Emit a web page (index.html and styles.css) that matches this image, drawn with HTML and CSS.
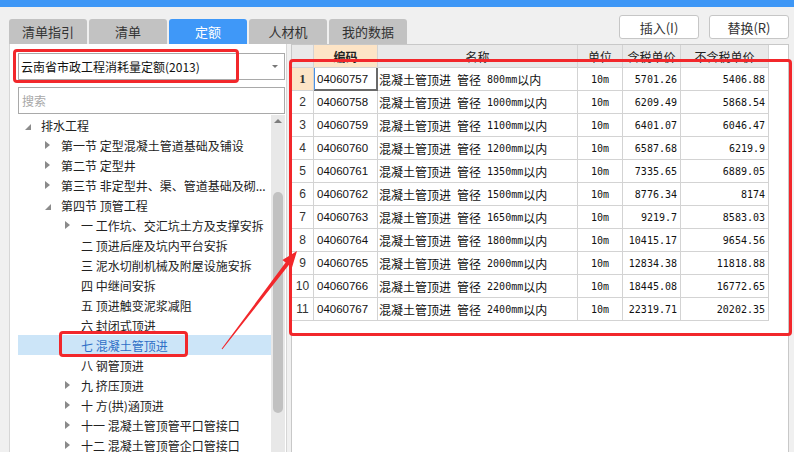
FILE: index.html
```html
<!DOCTYPE html>
<html lang="zh-CN">
<head>
<meta charset="utf-8">
<title>定额</title>
<link rel="stylesheet" href="styles.css">
</head>
<body>
<div class="topbar"></div>
<div class="toolbar">
  <div class="tabs">
    <div class="tab">清单指引</div>
    <div class="tab">清单</div>
    <div class="tab active">定额</div>
    <div class="tab">人材机</div>
    <div class="tab">我的数据</div>
  </div>
  <div class="actions">
    <div class="btn">插入(I)</div>
    <div class="btn">替换(R)</div>
  </div>
</div>
<div class="main">
  <div class="left">
    <div class="select"><span>云南省市政工程消耗量定额(2013)</span><span class="caret"></span></div>
    <div class="search">搜索</div>
    <div class="treewrap">
      <div class="tree">
        <div class="row l0"><span class="slot"><i class="open"></i></span><span class="txt">排水工程</span></div>
        <div class="row l1"><span class="slot"><i class="closed"></i></span><span class="txt">第一节 定型混凝土管道基础及铺设</span></div>
        <div class="row l1"><span class="slot"><i class="closed"></i></span><span class="txt">第二节 定型井</span></div>
        <div class="row l1"><span class="slot"><i class="closed"></i></span><span class="txt">第三节 非定型井、渠、管道基础及砌...</span></div>
        <div class="row l1"><span class="slot"><i class="open"></i></span><span class="txt">第四节 顶管工程</span></div>
        <div class="row l2"><span class="slot"><i class="closed"></i></span><span class="txt">一 工作坑、交汇坑土方及支撑安拆</span></div>
        <div class="row l2"><span class="slot"></span><span class="txt">二 顶进后座及坑内平台安拆</span></div>
        <div class="row l2"><span class="slot"></span><span class="txt">三 泥水切削机械及附屋设施安拆</span></div>
        <div class="row l2"><span class="slot"></span><span class="txt">四 中继间安拆</span></div>
        <div class="row l2"><span class="slot"></span><span class="txt">五 顶进触变泥浆减阻</span></div>
        <div class="row l2"><span class="slot"></span><span class="txt">六 封闭式顶进</span></div>
        <div class="row l2 sel"><span class="slot"></span><span class="txt">七 混凝土管顶进</span></div>
        <div class="row l2"><span class="slot"></span><span class="txt">八 钢管顶进</span></div>
        <div class="row l2"><span class="slot"><i class="closed"></i></span><span class="txt">九 挤压顶进</span></div>
        <div class="row l2"><span class="slot"><i class="closed"></i></span><span class="txt">十 方(拱)涵顶进</span></div>
        <div class="row l2"><span class="slot"><i class="closed"></i></span><span class="txt">十一 混凝土管顶管平口管接口</span></div>
        <div class="row l2"><span class="slot"><i class="closed"></i></span><span class="txt">十二 混凝土管顶管企口管接口</span></div>
      </div>
      <div class="vscroll"><i class="up"></i><div class="thumb"></div></div>
    </div>
  </div>
  <div class="right">
    <div class="grid">
      <div class="c hd"></div><div class="c hd code-hd">编码</div><div class="c hd">名称</div><div class="c hd">单位</div><div class="c hd">含税单价</div><div class="c hd">不含税单价</div>

      <div class="c no cur">1</div><div class="c code focus">04060757</div><div class="c name">混凝土管顶进<span class="m"> </span>管径<span class="m"> 800mm</span>以内</div><div class="c unit">10m</div><div class="c num">5701.26</div><div class="c num">5406.88</div>
      <div class="c no">2</div><div class="c code">04060758</div><div class="c name">混凝土管顶进<span class="m"> </span>管径<span class="m"> 1000mm</span>以内</div><div class="c unit">10m</div><div class="c num">6209.49</div><div class="c num">5868.54</div>
      <div class="c no">3</div><div class="c code">04060759</div><div class="c name">混凝土管顶进<span class="m"> </span>管径<span class="m"> 1100mm</span>以内</div><div class="c unit">10m</div><div class="c num">6401.07</div><div class="c num">6046.47</div>
      <div class="c no">4</div><div class="c code">04060760</div><div class="c name">混凝土管顶进<span class="m"> </span>管径<span class="m"> 1200mm</span>以内</div><div class="c unit">10m</div><div class="c num">6587.68</div><div class="c num">6219.9</div>
      <div class="c no">5</div><div class="c code">04060761</div><div class="c name">混凝土管顶进<span class="m"> </span>管径<span class="m"> 1350mm</span>以内</div><div class="c unit">10m</div><div class="c num">7335.65</div><div class="c num">6889.05</div>
      <div class="c no">6</div><div class="c code">04060762</div><div class="c name">混凝土管顶进<span class="m"> </span>管径<span class="m"> 1500mm</span>以内</div><div class="c unit">10m</div><div class="c num">8776.34</div><div class="c num">8174</div>
      <div class="c no">7</div><div class="c code">04060763</div><div class="c name">混凝土管顶进<span class="m"> </span>管径<span class="m"> 1650mm</span>以内</div><div class="c unit">10m</div><div class="c num">9219.7</div><div class="c num">8583.03</div>
      <div class="c no">8</div><div class="c code">04060764</div><div class="c name">混凝土管顶进<span class="m"> </span>管径<span class="m"> 1800mm</span>以内</div><div class="c unit">10m</div><div class="c num">10415.17</div><div class="c num">9654.56</div>
      <div class="c no">9</div><div class="c code">04060765</div><div class="c name">混凝土管顶进<span class="m"> </span>管径<span class="m"> 2000mm</span>以内</div><div class="c unit">10m</div><div class="c num">12834.38</div><div class="c num">11818.88</div>
      <div class="c no">10</div><div class="c code">04060766</div><div class="c name">混凝土管顶进<span class="m"> </span>管径<span class="m"> 2200mm</span>以内</div><div class="c unit">10m</div><div class="c num">18445.08</div><div class="c num">16772.65</div>
      <div class="c no">11</div><div class="c code">04060767</div><div class="c name">混凝土管顶进<span class="m"> </span>管径<span class="m"> 2400mm</span>以内</div><div class="c unit">10m</div><div class="c num">22319.71</div><div class="c num">20202.35</div>
    </div>
  </div>
</div>

<div class="mark mark-select"></div>
<div class="mark mark-item"></div>
<div class="mark mark-table"></div>
<svg class="arrow" width="794" height="452" viewBox="0 0 794 452">
  <polygon points="221.6,348.7 285.6,262.6 282.4,260.1 297,251 292,267.5 288.8,265 222.4,349.3" fill="#f2272b"/>
</svg>
</body>
</html>
```
FILE: styles.css
```css
* { box-sizing: border-box; }
html, body { margin: 0; padding: 0; }
body {
  width: 794px;
  height: 452px;
  overflow: hidden;
  position: relative;
  background: #f0f0f0;
  font-family: "Noto Sans CJK SC", "Microsoft YaHei", sans-serif;
  font-size: 12px;
  color: #222;
}
.topbar { height: 7px; background: #3e97f6; }
.toolbar {
  height: 37px;
  display: flex;
  justify-content: space-between;
  padding: 0 5px 0 9px;
}
.tabs { display: flex; gap: 2px; align-self: flex-end; }
.tab {
  width: 78px;
  height: 25px;
  background: #c2c2c2;
  border-radius: 3px 3px 0 0;
  display: flex;
  align-items: center;
  justify-content: center;
  font-size: 13px;
  color: #333;
}
.tab.active { background: #3f98f8; color: #fff; }
.actions { display: flex; gap: 10px; padding-top: 8px; }
.btn {
  width: 80px;
  height: 24px;
  background: #fff;
  border: 1px solid #c6c6c6;
  border-radius: 3px;
  display: flex;
  align-items: center;
  justify-content: center;
  font-size: 13px;
  color: #333;
}
.main {
  height: 408px;
  display: flex;
  gap: 4px;
  padding-left: 9px;
}
.left {
  width: 278px;
  background: #fff;
  border-left: 1px solid #d6d6d6;
  border-right: 1px solid #d6d6d6;
  padding: 9px 1px 0 8px;
  display: flex;
  flex-direction: column;
}
.select {
  height: 27px;
  border: 1px solid #a9a9a9;
  display: flex;
  align-items: center;
  justify-content: space-between;
  padding: 0 6px 0 2px;
  color: #111;
}
.caret {
  width: 0; height: 0;
  border-left: 3px solid transparent;
  border-right: 3px solid transparent;
  border-top: 3px solid #777;
}
.search {
  margin-top: 7px;
  height: 27px;
  border: 1px solid #a9a9a9;
  display: flex;
  align-items: center;
  padding-left: 3px;
  color: #a8a8a8;
}
.treewrap {
  flex: 1;
  min-height: 0;
  margin-top: 1px;
  display: flex;
  overflow: hidden;
}
.tree { flex: 1; min-width: 0; }
.row {
  height: 20px;
  display: flex;
  align-items: center;
  white-space: nowrap;
  overflow: hidden;
  color: #222;
}
.row.l0 { padding-left: 7px; }
.row.l1 { padding-left: 27px; }
.row.l2 { padding-left: 47px; }
.row.sel { background: #cce5f8; color: #2f6fc6; }
.slot { width: 16px; flex: none; display: flex; align-items: center; height: 20px; }
.txt { overflow: hidden; }
.open {
  display: block;
  width: 0; height: 0;
  margin-top: 3px;
  border-left: 6px solid transparent;
  border-bottom: 6px solid #8c8c8c;
}
.closed {
  display: block;
  width: 0; height: 0;
  border-top: 4px solid transparent;
  border-bottom: 4px solid transparent;
  border-left: 5px solid #8a8a8a;
}
.vscroll {
  width: 14px;
  flex: none;
  background: #e8e8e8;
  display: flex;
  flex-direction: column;
  align-items: center;
}
.up {
  display: block;
  margin-top: 4px;
  width: 0; height: 0;
  border-left: 4px solid transparent;
  border-right: 4px solid transparent;
  border-bottom: 4px solid #7d7d7d;
}
.thumb {
  margin-top: 69px;
  width: 10px;
  height: 221px;
  border-radius: 5px;
  background: #c1c1c1;
}
.right {
  width: 498px;
  background: #fff;
  border: 1px solid #c8c8c8;
  border-bottom: none;
}
.grid {
  display: grid;
  grid-template-columns: 22px 64px 200px 45px 58px 88px;
  grid-auto-rows: 23px;
  width: 477px;
}
.c {
  border-right: 1px solid #d3d3d3;
  border-bottom: 1px solid #d3d3d3;
  display: flex;
  align-items: center;
  white-space: nowrap;
  overflow: hidden;
  color: #111;
}
.hd { background: #e9e9e9; justify-content: center; color: #222; }
.hd.code-hd { background: #fde4c6; font-weight: bold; }
.no {
  justify-content: center;
  font-family: "Liberation Sans", sans-serif;
  font-size: 12px;
  color: #333;
}
.no.cur {
  background: #fde4c6;
  font-family: "Liberation Serif", serif;
  font-weight: bold;
  font-size: 13px;
}
.code {
  padding-left: 3px;
  font-family: "Liberation Sans", sans-serif;
  font-size: 11.5px;
}
.code.focus {
  border-right-color: #6a6a6a;
  border-bottom-color: #6a6a6a;
  box-shadow: inset 1px 0 0 #4a90e2, inset -1px -1px 0 #6a6a6a;
}
.name { padding-left: 1px; font-size: 12px; }
.m {
  font-family: "DejaVu Sans Mono", monospace;
  font-size: 10px;
  white-space: pre;
}
.unit {
  justify-content: center;
  font-family: "DejaVu Sans Mono", monospace;
  font-size: 10px;
}
.num {
  justify-content: flex-end;
  padding-right: 3px;
  font-family: "DejaVu Sans Mono", monospace;
  font-size: 10px;
}
.mark {
  position: absolute;
  border: 3px solid #f2272b;
  border-radius: 4px;
  pointer-events: none;
}
.mark-select { left: 13px; top: 49px; width: 226px; height: 34px; }
.mark-item { left: 59px; top: 331px; width: 129px; height: 26px; }
.mark-table { left: 289px; top: 59px; width: 503px; height: 277px; }
.arrow { position: absolute; left: 0; top: 0; pointer-events: none; }
```
